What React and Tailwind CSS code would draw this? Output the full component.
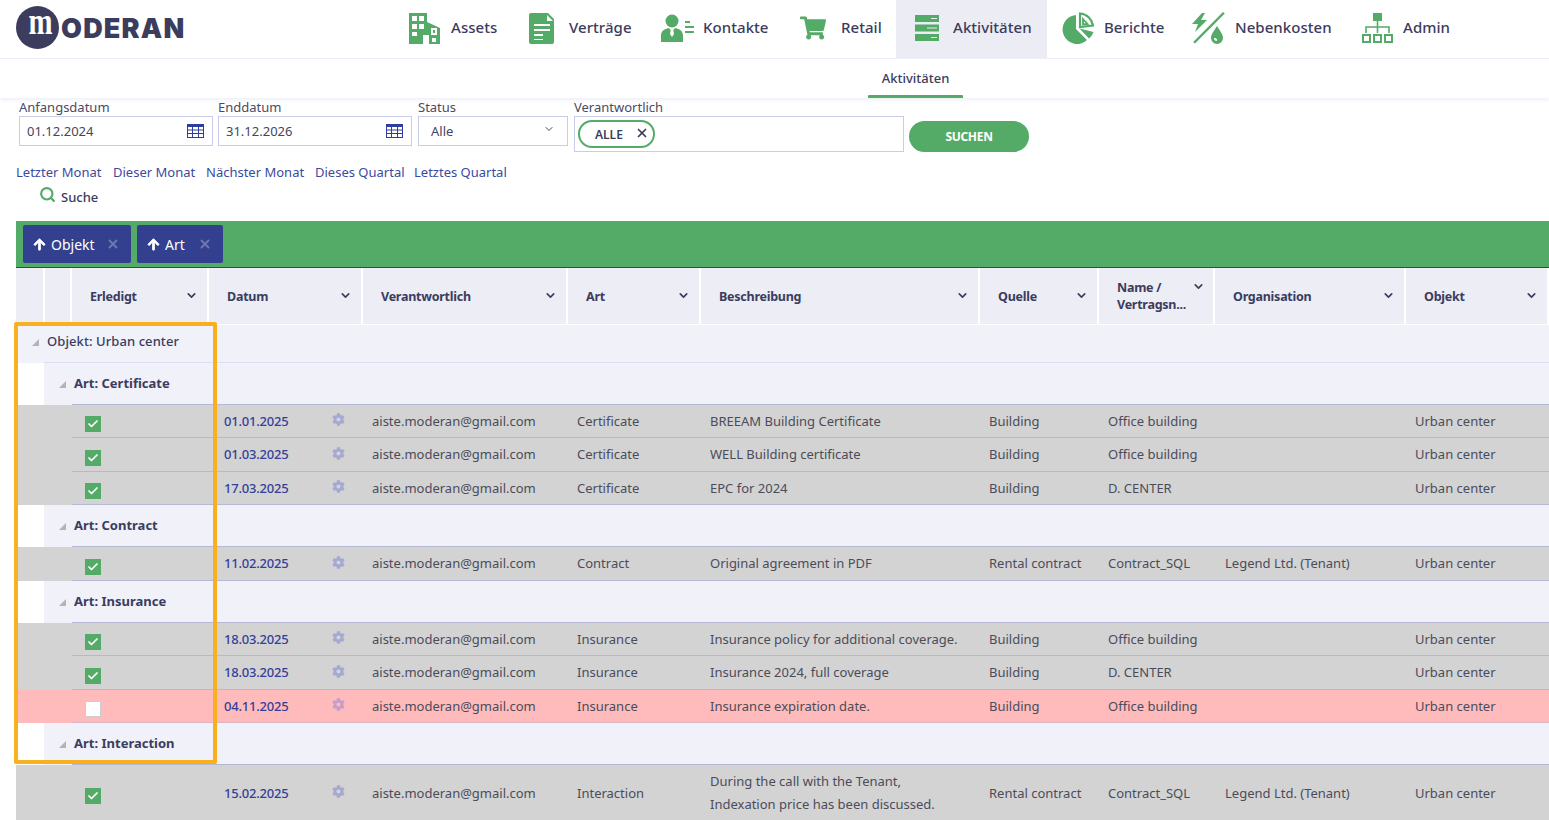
import React from "react";
import { FaCog, FaArrowUp, FaShoppingCart } from "react-icons/fa";
import { ChevronDown, Search, X, Check } from "lucide-react";

const G = "#54aa67";
const COLS = "grid grid-cols-[28px_28px_137px_154px_205px_133px_279px_119px_116px_191px_143px]";

const Building = () => (
  <svg width="31" height="31" viewBox="0 0 31 31">
    <path fill={G} fillRule="evenodd" d="M0 0h18v9l13 6v16H20v-9h-6v9H0zM3 3v5h5V3zm7 0v5h5V3zM3 11v5h5v-5zm7 0v5h5v-5zM3 19v4h5v-4zm19-4v7h6v-7zm2 2h2v3h-2zm-1 8v4h4v-4z" />
  </svg>
);
const Doc = () => (
  <svg width="26" height="31" viewBox="0 0 26 31">
    <path fill={G} fillRule="evenodd" d="M2 0h17l6 6v23a2 2 0 0 1-2 2H2a2 2 0 0 1-2-2V2a2 2 0 0 1 2-2zm3 11v2h16v-2zm0 5v2h16v-2zm0 5v2h9v-2zm0 5v1h9v-1zM18 2v6h6z" />
  </svg>
);
const Contact = () => (
  <svg width="33" height="28" viewBox="0 0 33 28">
    <circle cx="11" cy="7" r="6.5" fill={G} />
    <path fill={G} d="M0 28v-6c0-5 3-7 8-8l3 4 3-4c5 1 8 3 8 8v6z" />
    <path fill="#fff" d="M10 15h2l1 5-2 3-2-3z" />
    <path fill={G} d="M24 7h5v2h-5zM24 12h9v2h-9zM24 17h9v2h-9z" />
  </svg>
);
const Server = () => (
  <svg width="24" height="28" viewBox="0 0 24 28">
    <path fill={G} fillRule="evenodd" d="M0 1h24v7H0zm16 3v1h6V4zM0 10.500h24v7H0zm12 3v1h10v-1zM0 20h24v7H0zm16 3v1h6v-1z" />
  </svg>
);
const Pie = () => (
  <svg width="32" height="32" viewBox="0 0 32 32">
    <path fill={G} d="M14 3A14.500 14.500 0 1 0 25 28L14 17z" />
    <path fill={G} d="M17.500 16.500 31.500 20A15 15 0 0 1 27 26.500z" />
    <path fill="none" stroke={G} strokeWidth="2.200" d="M18 1.500a14 14 0 0 1 13 12l-13 1.500z" />
    <path fill="none" stroke={G} strokeWidth="1.800" d="M21 7l4.500 5-4.500.5z" />
  </svg>
);
const Utility = () => (
  <svg width="33" height="32" viewBox="0 0 33 32">
    <path fill={G} d="M31 0l1.800 1.600L3 31.500 1.200 30z" />
    <path fill={G} d="M10 1h3L9 8h6L3 20l3-8H0z" />
    <path fill={G} fillRule="evenodd" d="M25 14c3 5 6 8 6 12a6 6 0 0 1-12 0c0-4 3-7 6-12zm-3 12a3 3 0 0 0 3 3v-2a1 1 0 0 1-1-1z" />
  </svg>
);
const Org = () => (
  <svg width="31" height="31" viewBox="0 0 31 31">
    <path fill={G} d="M11 0h9v8h-9z" />
    <path fill="none" stroke={G} strokeWidth="1.600" d="M15.500 8v6M4 20v-6h23v6M15.500 14v6" />
    <path fill="none" stroke={G} strokeWidth="2" d="M1 22h7v7H1zM12 22h7v7h-7zM23 22h7v7h-7z" />
  </svg>
);
const Calendar = () => (
  <svg width="17" height="14" viewBox="0 0 17 14">
    <path fill="#2f3e9e" fillRule="evenodd" d="M0 0h17v14H0zm1 3v2.500h4V3zm5 0v2.500h5V3zm6 0v2.500h4V3zM1 6.500V9h4V6.500zm5 0V9h5V6.500zm6 0V9h4V6.500zM1 10v3h4v-3zm5 0v3h5v-3zm6 0v3h4v-3z" />
  </svg>
);
const Tri = () => (
  <svg width="7" height="7" viewBox="0 0 7 7"><path fill="#b4b4b4" d="M7 0v7H0z" /></svg>
);

const nav = [
  ["Assets", "w-[120px]", "w-[42px]", <Building />],
  ["Verträge", "w-[132px]", "w-[40px]", <Doc />],
  ["Kontakte", "w-[139px]", "w-[42px]", <Contact />],
  ["Retail", "w-[111px]", "w-[41px]", <FaShoppingCart size={26} color={G} />],
];
const nav2 = [
  ["Berichte", "w-[130px]", "w-[42px]", <Pie />],
  ["Nebenkosten", "w-[170px]", "w-[43px]", <Utility />],
  ["Admin", "w-[123px]", "w-[41px]", <Org />],
];

function NavItem({ item }) {
  const [label, w, iw, icon] = item;
  return (
    <div className={`${w} flex h-full items-center pb-[2px] pl-[15px]`}>
      <div className={`${iw} flex items-center`}>{icon}</div>
      <span className="-mt-[2px] text-[15px] font-medium tracking-[0.05px] text-[#3b3c5e]">{label}</span>
    </div>
  );
}

function Label({ children, className = "" }) {
  return <div className={`h-[18px] text-[13px] leading-[18px] text-[#4a4b63] ${className}`}>{children}</div>;
}

function DateField({ label, value, cls }) {
  return (
    <div className={cls}>
      <Label>{label}</Label>
      <div className="flex h-[30px] items-center justify-between border border-[#c9cee8] pl-[7px] pr-2 text-[13px] text-[#45465c]">
        <span className="mt-[1px]">{value}</span>
        <Calendar />
      </div>
    </div>
  );
}

const headers = [
  ["", "mr-[1px]"],
  ["", "ml-[1px] mr-[2px]"],
  ["Erledigt", "mr-[2px] pl-[18px] pr-[9px]"],
  ["Datum", "mr-[2px] pl-[18px] pr-[9px]"],
  ["Verantwortlich", "mr-[2px] pl-[18px] pr-[9px]"],
  ["Art", "mr-[2px] pl-[18px] pr-[9px]"],
  ["Beschreibung", "mr-[2px] pl-[18px] pr-[9px]"],
  ["Quelle", "mr-[2px] pl-[18px] pr-[9px]"],
  ["Name /\nVertragsn...", "mr-[2px] pl-[18px] pr-2"],
  ["Organisation", "mr-[2px] pl-[18px] pr-[9px]"],
  ["Objekt", "mr-[2px] pl-[18px] pr-[9px]"],
];

function HeaderRow() {
  return (
    <div className={`${COLS} h-[58px] border-t border-[#444444] bg-white`}>
      {headers.map(([t, c], i) => (
        <div key={i} className={`flex h-[56px] items-center justify-between bg-[#ecedf5] ${c}`}>
          {t && <span className="whitespace-pre-line text-[12.5px] font-bold leading-[17px] tracking-[-0.25px] text-[#3b3c5e]">{t}</span>}
          {t && <ChevronDown size={13} strokeWidth={3} color="#3b3c5e" className={t.startsWith("Name") ? "-mt-5" : "-mt-[2px]"} />}
        </div>
      ))}
    </div>
  );
}

function ObjektRow({ label }) {
  return (
    <div className="flex h-[38px] bg-[#f0f1f9]">
      <div className="flex h-[37px] w-[28px] items-center justify-end pb-[3px] pr-[5px]"><Tri /></div>
      <div className="flex flex-1 items-center border-b border-[#dcddf0] pb-1">
        <span className="pl-[3px] text-[13px] font-medium tracking-[0.08px] text-[#3b3c5e]">{label}</span>
      </div>
    </div>
  );
}

function ArtRow({ label }) {
  return (
    <div className="flex h-[42px]">
      <div className="w-[28px] bg-white" />
      <div className="flex w-[28px] items-center justify-end bg-[#f0f1f9] pr-[6px]"><Tri /></div>
      <div className="flex flex-1 items-center border-b border-[#b5b7d3] bg-[#f0f1f9] pt-[1px]">
        <span className="pl-[2px] text-[13px] font-bold text-[#3b3c5e]">{label}</span>
      </div>
    </div>
  );
}

function DataRow({ r }) {
  const bg = r.pink ? "bg-[#ffbbbb]" : "bg-[#d3d3d3]";
  const line = r.noline ? "" : r.pink ? "border-b border-[#dcb4c4]" : "border-b border-[#b5b7d3]";
  const cell = `flex items-center text-[13px] leading-[23px] text-[#4b4c5a] ${line}`;
  return (
    <div className={`${COLS} ${r.h} ${bg}`}>
      <div />
      <div />
      <div className={`${line} flex items-center pl-[13px] pt-[6px]`}>
        {r.done ? (
          <span className="flex h-4 w-4 items-center justify-center bg-[#54aa67]">
            <Check size={12} strokeWidth={3.5} color="#fff" />
          </span>
        ) : (
          <span className="h-4 w-4 border border-[#cccccc] bg-white" />
        )}
      </div>
      <div className={`${cell} justify-between pl-[15px] pr-[18px]`}>
        <span className="font-medium tracking-[-0.2px] text-[#333f9a]">{r.date}</span>
        <FaCog size={13} color={r.pink ? "#c79cc6" : "#a3a9d3"} className="-mt-[3px]" />
      </div>
      <div className={`${cell} pl-[9px]`}>aiste.moderan@gmail.com</div>
      <div className={`${cell} pl-[9px]`}>{r.art}</div>
      <div className={`${cell} whitespace-pre-line pl-[9px]`}>{r.desc}</div>
      <div className={`${cell} pl-[9px]`}>{r.src}</div>
      <div className={`${cell} pl-[9px]`}>{r.name}</div>
      <div className={`${cell} pl-[10px]`}>{r.org}</div>
      <div className={`${cell} pl-[9px]`}>Urban center</div>
    </div>
  );
}

const B = "Building";
const OB = "Office building";
const LG = "Legend Ltd. (Tenant)";
const rowsA = [
  { h: "h-[33px]", done: 1, date: "01.01.2025", art: "Certificate", desc: "BREEAM Building Certificate", src: B, name: OB },
  { h: "h-[34px]", done: 1, date: "01.03.2025", art: "Certificate", desc: "WELL Building certificate", src: B, name: OB },
  { h: "h-[33px]", done: 1, date: "17.03.2025", art: "Certificate", desc: "EPC for 2024", src: B, name: "D. CENTER" },
];
const rowsB = [
  { h: "h-[34px]", done: 1, date: "11.02.2025", art: "Contract", desc: "Original agreement in PDF", src: "Rental contract", name: "Contract_SQL", org: LG },
];
const rowsC = [
  { h: "h-[33px]", done: 1, date: "18.03.2025", art: "Insurance", desc: "Insurance policy for additional coverage.", src: B, name: OB },
  { h: "h-[34px]", done: 1, date: "18.03.2025", art: "Insurance", desc: "Insurance 2024, full coverage", src: B, name: "D. CENTER" },
  { h: "h-[33px]", pink: 1, date: "04.11.2025", art: "Insurance", desc: "Insurance expiration date.", src: B, name: OB },
];
const rowsD = [
  { h: "h-[56px]", noline: 1, done: 1, date: "15.02.2025", art: "Interaction", desc: "During the call with the Tenant,\nIndexation price has been discussed.", src: "Rental contract", name: "Contract_SQL", org: LG },
];

const quick = [
  ["Letzter Monat", "w-[97px]"],
  ["Dieser Monat", "w-[93px]"],
  ["Nächster Monat", "w-[109px]"],
  ["Dieses Quartal", "w-[99px]"],
  ["Letztes Quartal", ""],
];

function SortChip({ label, w }) {
  return (
    <div className={`${w} flex h-[38px] items-center rounded-[2px] bg-[#333f8f] pl-[10px] pr-[11px] text-[14px] text-white`}>
      <FaArrowUp size={13} stroke="currentColor" strokeWidth={30} />
      <span className="ml-[5px] flex-1">{label}</span>
      <X size={14} strokeWidth={3.5} color="#6d76ad" />
    </div>
  );
}

export default function App() {
  return (
    <div className="relative h-[820px] w-[1549px] overflow-hidden bg-white font-['Noto_Sans','Open_Sans',sans-serif]">
      <header className="flex h-[59px] border-b border-[#eeeefa]">
        <div className="flex w-[394px] shrink-0 items-center pb-[3px] pl-4">
          <div className="flex h-[43px] w-[43px] shrink-0 items-center justify-center rounded-full bg-[#3b3c5e]">
            <span className="-mt-[11px] ml-[5px] scale-x-[0.78] font-['Liberation_Serif',serif] text-[37px] font-bold leading-[30px] text-white">m</span>
          </div>
          <span className="ml-[2px] mt-[3px] font-['Inter',sans-serif] text-[27px] font-black leading-[32px] tracking-[1.2px] text-[#3b3c5e]">ODERAN</span>
        </div>
        {nav.map((n) => <NavItem key={n[0]} item={n} />)}
        <div className="flex h-full w-[151px] items-center bg-[#ebecf4] pb-[2px] pl-[19px]">
          <div className="flex w-[38px] items-center"><Server /></div>
          <span className="-mt-[2px] text-[15px] font-medium tracking-[0.05px] text-[#3b3c5e]">Aktivitäten</span>
        </div>
        {nav2.map((n) => <NavItem key={n[0]} item={n} />)}
      </header>

      <div className="flex h-[39px] justify-center pl-[282px] shadow-[0_2px_4px_#eeeef8]">
        <div className="flex h-full w-[95px] flex-col items-center justify-between">
          <span className="mt-[10px] text-[13px] font-medium leading-[18px] text-[#3b3c5e]">Aktivitäten</span>
          <span className="h-[3px] w-full rounded-t-[1px] bg-[#54aa67]" />
        </div>
      </div>

      <div className="flex">
        <DateField label="Anfangsdatum" value="01.12.2024" cls="ml-[19px] w-[194px]" />
        <DateField label="Enddatum" value="31.12.2026" cls="ml-[5px] w-[194px]" />
        <div className="ml-[6px] w-[150px]">
          <Label>Status</Label>
          <div className="flex h-[30px] items-center justify-between border border-[#c9cee8] pl-3 pr-3 text-[13px] text-[#45465c]">
            <span className="mt-[1px]">Alle</span>
            <ChevronDown size={12} color="#45465c" className="-mt-1" />
          </div>
        </div>
        <div className="ml-[6px] w-[330px]">
          <Label>Verantwortlich</Label>
          <div className="flex h-[36px] items-start border border-[#c9cee8] pl-[3px] pt-[3px]">
            <div className="flex h-[28px] w-[77px] items-center justify-between rounded-full border-2 border-[#54aa67] pl-[15px] pr-[4px]">
              <span className="mt-[1px] text-[12px] font-semibold text-[#3b3c5e]">ALLE</span>
              <X size={14} strokeWidth={3} color="#3b3c5e" className="-mt-[2px]" />
            </div>
          </div>
        </div>
        <div className="ml-[5px] mt-[23px] flex h-[31px] w-[120px] items-center justify-center rounded-full bg-[#54aa67] text-[12px] font-bold tracking-[-0.3px] text-white">SUCHEN</div>
      </div>

      <div className="ml-4 mt-[12px] flex h-[18px] items-center text-[13px] text-[#3a4a9f]">
        {quick.map(([t, w]) => <span key={t} className={w}>{t}</span>)}
      </div>

      <div className="ml-[39px] mt-[5px] flex h-[20px] items-center">
        <Search size={17} strokeWidth={3} color={G} className="-mt-[5px]" />
        <span className="ml-[5px] mt-[1px] text-[13px] font-medium text-[#3b3c5e]">Suche</span>
      </div>

      <main className="ml-4 mt-[14px]">
        <div className="flex h-[46px] items-center gap-[6px] bg-[#54aa67] pl-[7px]">
          <SortChip label="Objekt" w="w-[108px]" />
          <SortChip label="Art" w="w-[86px]" />
        </div>
        <HeaderRow />
        <ObjektRow label="Objekt: Urban center" />
        <ArtRow label="Art: Certificate" />
        {rowsA.map((r) => <DataRow key={r.date} r={r} />)}
        <ArtRow label="Art: Contract" />
        {rowsB.map((r) => <DataRow key={r.date} r={r} />)}
        <ArtRow label="Art: Insurance" />
        {rowsC.map((r) => <DataRow key={r.date + r.desc} r={r} />)}
        <ArtRow label="Art: Interaction" />
        {rowsD.map((r) => <DataRow key={r.date} r={r} />)}
      </main>

      <div className="pointer-events-none absolute left-[14px] top-[322px] h-[442px] w-[203px] rounded-[2px] border-[4px] border-[#f8b01e]" />
    </div>
  );
}
